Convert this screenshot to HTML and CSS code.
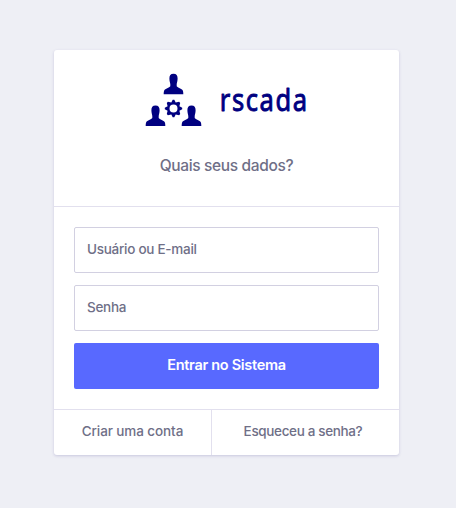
FILE: index.html
```html
<!DOCTYPE html>
<html lang="pt-BR">
<head>
<meta charset="utf-8">
<title>rscada</title>
<link rel="stylesheet" href="styles.css">
</head>
<body>
<main class="card">
  <header class="card-header">
    <svg class="logo" width="164" height="56" viewBox="0 0 164 56" role="img" aria-label="rscada">
      <defs>
        <path id="person" d="M10 0C7 0 5.900 1.600 5.900 4.800C5.900 7.300 6.600 9 6.800 10.400V12.600C5.800 14.300 1.700 14.800 .7 16.800C.2 18 .2 19.500 .2 20.500H19.800C19.800 19.500 19.800 18 19.300 16.800C18.300 14.800 14.200 14.300 13.200 12.600V10.400C13.400 9 14.100 7.300 14.100 4.800C14.100 1.600 13 0 10 0Z"/>
      </defs>
      <use href="#person" x="18.500" y=".7"/>
      <use href="#person" x=".5" y="32.500"/>
      <use href="#person" x="36.500" y="32.500"/>
      <g transform="translate(28.500 35.500)">
        <path class="gear" fill-rule="evenodd" d="M-.8-8.700H.8L2.200-5.900L5.600-6.700L6.700-5.600L5.900-2.200L8.700-.8V.8L5.900 2.200L6.700 5.600L5.600 6.700L2.200 5.900L.8 8.700H-.8L-2.200 5.900L-5.600 6.700L-6.700 5.600L-5.900 2.200L-8.700 .8V-.8L-5.900-2.200L-6.700-5.600L-5.600-6.700L-2.200-5.900ZM0-4A4 4 0 1 0 0 4A4 4 0 1 0 0-4Z"/>
      </g>
      <text class="wordmark" transform="translate(74.800 38) scale(.85 1)">rscada</text>
    </svg>
    <p class="subtitle">Quais seus dados?</p>
  </header>
  <form class="card-body">
    <input class="field user" type="text" placeholder="Usuário ou E-mail">
    <input class="field password" type="password" placeholder="Senha">
    <button class="submit" type="button">Entrar no Sistema</button>
  </form>
  <footer class="card-footer">
    <a class="create">Criar uma conta</a>
    <a class="forgot">Esqueceu a senha?</a>
  </footer>
</main>
</body>
</html>
```
FILE: styles.css
```css
* { box-sizing: border-box; }
body {
  margin: 0;
  padding: 50px 57px 0 54px;
  min-height: 508px;
  background: #eeeff5;
  font-family: Inter, "Liberation Sans", sans-serif;
  font-weight: 500;
  color: #6f6f87;
}
.card {
  width: 345px;
  height: 405px;
  display: flex;
  flex-direction: column;
  background: #fff;
  border-radius: 3px;
  box-shadow: 0 1px 3px rgba(70, 60, 140, .22);
}
.card-header {
  height: 157px;
  padding-top: 23px;
  border-bottom: 1px solid #e2e0ee;
}
.logo { display: block; margin-left: 91px; fill: #000080; overflow: visible; }
.wordmark {
  font: 400 30px "Noto Sans", sans-serif;
  letter-spacing: 1.9px;
  stroke: #000080;
  stroke-width: .9;
  stroke-linejoin: round;
}
.subtitle {
  margin: 25px 0 0;
  font-size: 15.5px;
  line-height: 24px;
  letter-spacing: -.35px;
  text-align: center;
}
.card-body {
  display: flex;
  flex-direction: column;
  gap: 12px;
  height: 202px;
  padding: 20px;
}
.field {
  height: 46px;
  padding: 0 12px 2px;
  border: 1px solid #d2d0e1;
  border-radius: 2px;
  background: #fff;
  font: inherit;
  font-size: 13.5px;
  letter-spacing: -.27px;
}
.field::placeholder { color: #6f6f87; opacity: 1; }
.submit {
  height: 46px;
  padding: 0 0 3px;
  border: 0;
  border-radius: 2px;
  background: #5869ff;
  color: #fff;
  font: inherit;
  font-size: 14.5px;
  font-weight: 600;
  letter-spacing: -.3px;
}
.card-footer {
  display: grid;
  grid-template-columns: 158px 1fr;
  height: 46px;
  border-top: 1px solid #e2e0ee;
  font-size: 13.5px;
  line-height: 43px;
  text-align: center;
}
.create { border-right: 1px solid #e2e0ee; letter-spacing: -.1px; }
.forgot { letter-spacing: -.35px; padding-right: 5px; }
```
